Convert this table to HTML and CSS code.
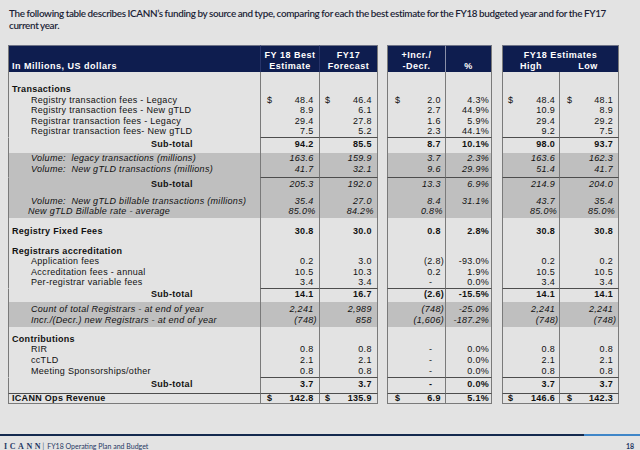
FILE: index.html
```html
<!DOCTYPE html>
<html lang="en">
<head>
<meta charset="utf-8">
<title>ICANN FY18 Funding</title>
<link rel="stylesheet" href="styles.css">
</head>
<body>
<p class="intro">The following table describes ICANN’s funding by source and type, comparing for each the best estimate for the FY18 budgeted year and for the FY17<br>current year.</p>

<div class="budget">
  <div class="r hd">
    <div class="l hl">In Millions, US dollars</div>
    <div class="a hc">FY 18 Best<br>Estimate</div>
    <div class="b hc">FY17<br>Forecast</div>
    <div class="g"></div>
    <div class="c hc">+Incr./<br>-Decr.</div>
    <div class="d hc"><br>%</div>
    <div class="g"></div>
    <div class="ef">
      <div class="eft">FY18 Estimates</div>
      <div class="efs"><span>High</span><span>Low</span></div>
    </div>
  </div>

  <div class="r sp12"><div class="l"></div><div class="a"></div><div class="b"></div><div class="g"></div><div class="c"></div><div class="d"></div><div class="g"></div><div class="e"></div><div class="f"></div></div>

  <div class="r"><div class="l sec">Transactions</div><div class="a"></div><div class="b"></div><div class="g"></div><div class="c"></div><div class="d"></div><div class="g"></div><div class="e"></div><div class="f"></div></div>
  <div class="r"><div class="l it1">Registry transaction fees - Legacy</div><div class="a"><span>$</span><span class="n">48.4</span></div><div class="b"><span>$</span><span class="n">46.4</span></div><div class="g"></div><div class="c"><span>$</span><span class="n">2.0</span></div><div class="d"><span class="n">4.3%</span></div><div class="g"></div><div class="e"><span>$</span><span class="n">48.4</span></div><div class="f"><span>$</span><span class="n">48.1</span></div></div>
  <div class="r"><div class="l it1">Registry transaction fees - New gTLD</div><div class="a"><span class="n">8.9</span></div><div class="b"><span class="n">6.1</span></div><div class="g"></div><div class="c"><span class="n">2.7</span></div><div class="d"><span class="n">44.9%</span></div><div class="g"></div><div class="e"><span class="n">10.9</span></div><div class="f"><span class="n">8.9</span></div></div>
  <div class="r"><div class="l it1">Registrar transaction fees - Legacy</div><div class="a"><span class="n">29.4</span></div><div class="b"><span class="n">27.8</span></div><div class="g"></div><div class="c"><span class="n">1.6</span></div><div class="d"><span class="n">5.9%</span></div><div class="g"></div><div class="e"><span class="n">29.4</span></div><div class="f"><span class="n">29.2</span></div></div>
  <div class="r"><div class="l it1">Registrar transaction fees- New gTLD</div><div class="a"><span class="n">7.5</span></div><div class="b"><span class="n">5.2</span></div><div class="g"></div><div class="c"><span class="n">2.3</span></div><div class="d"><span class="n">44.1%</span></div><div class="g"></div><div class="e"><span class="n">9.2</span></div><div class="f"><span class="n">7.5</span></div></div>
  <div class="r tot t1 bold"><div class="l st">Sub-total</div><div class="a"><span class="n">94.2</span></div><div class="b"><span class="n">85.5</span></div><div class="g"></div><div class="c"><span class="n">8.7</span></div><div class="d"><span class="n">10.1%</span></div><div class="g"></div><div class="e"><span class="n">98.0</span></div><div class="f"><span class="n">93.7</span></div></div>

  <div class="r band it b1"><div class="l it1">Volume:&nbsp; legacy transactions (millions)</div><div class="a"><span class="n">163.6</span></div><div class="b"><span class="n">159.9</span></div><div class="g"></div><div class="c"><span class="n">3.7</span></div><div class="d"><span class="n">2.3%</span></div><div class="g"></div><div class="e"><span class="n">163.6</span></div><div class="f"><span class="n">162.3</span></div></div>
  <div class="r band it b2"><div class="l it1">Volume:&nbsp; New gTLD transactions (millions)</div><div class="a"><span class="n">41.7</span></div><div class="b"><span class="n">32.1</span></div><div class="g"></div><div class="c"><span class="n">9.6</span></div><div class="d"><span class="n">29.9%</span></div><div class="g"></div><div class="e"><span class="n">51.4</span></div><div class="f"><span class="n">41.7</span></div></div>
  <div class="r band it tot t2"><div class="l st up">Sub-total</div><div class="a"><span class="n">205.3</span></div><div class="b"><span class="n">192.0</span></div><div class="g"></div><div class="c"><span class="n">13.3</span></div><div class="d"><span class="n">6.9%</span></div><div class="g"></div><div class="e"><span class="n">214.9</span></div><div class="f"><span class="n">204.0</span></div></div>
  <div class="r band sp6"><div class="l"></div><div class="a"></div><div class="b"></div><div class="g"></div><div class="c"></div><div class="d"></div><div class="g"></div><div class="e"></div><div class="f"></div></div>
  <div class="r band it"><div class="l it1">Volume:&nbsp; New gTLD billable transactions (millions)</div><div class="a"><span class="n">35.4</span></div><div class="b"><span class="n">27.0</span></div><div class="g"></div><div class="c"><span class="n">8.4</span></div><div class="d"><span class="n">31.1%</span></div><div class="g"></div><div class="e"><span class="n">43.7</span></div><div class="f"><span class="n">35.4</span></div></div>
  <div class="r band it b3"><div class="l it2">New gTLD Billable rate - average</div><div class="a"><span class="n pc">85.0%</span></div><div class="b"><span class="n pc">84.2%</span></div><div class="g"></div><div class="c"><span class="n pc">0.8%</span></div><div class="d"></div><div class="g"></div><div class="e"><span class="n pc">85.0%</span></div><div class="f"><span class="n pc">85.0%</span></div></div>

  <div class="r sp8"><div class="l"></div><div class="a"></div><div class="b"></div><div class="g"></div><div class="c"></div><div class="d"></div><div class="g"></div><div class="e"></div><div class="f"></div></div>
  <div class="r bold"><div class="l sec">Registry Fixed Fees</div><div class="a"><span class="n">30.8</span></div><div class="b"><span class="n">30.0</span></div><div class="g"></div><div class="c"><span class="n">0.8</span></div><div class="d"><span class="n">2.8%</span></div><div class="g"></div><div class="e"><span class="n">30.8</span></div><div class="f"><span class="n">30.8</span></div></div>
  <div class="r sp9"><div class="l"></div><div class="a"></div><div class="b"></div><div class="g"></div><div class="c"></div><div class="d"></div><div class="g"></div><div class="e"></div><div class="f"></div></div>

  <div class="r"><div class="l sec">Registrars accreditation</div><div class="a"></div><div class="b"></div><div class="g"></div><div class="c"></div><div class="d"></div><div class="g"></div><div class="e"></div><div class="f"></div></div>
  <div class="r"><div class="l it1">Application fees</div><div class="a"><span class="n">0.2</span></div><div class="b"><span class="n">3.0</span></div><div class="g"></div><div class="c"><span class="n neg">(2.8)</span></div><div class="d"><span class="n">-93.0%</span></div><div class="g"></div><div class="e"><span class="n">0.2</span></div><div class="f"><span class="n">0.2</span></div></div>
  <div class="r"><div class="l it1">Accreditation fees - annual</div><div class="a"><span class="n">10.5</span></div><div class="b"><span class="n">10.3</span></div><div class="g"></div><div class="c"><span class="n">0.2</span></div><div class="d"><span class="n">1.9%</span></div><div class="g"></div><div class="e"><span class="n">10.5</span></div><div class="f"><span class="n">10.5</span></div></div>
  <div class="r"><div class="l it1">Per-registrar variable fees</div><div class="a"><span class="n">3.4</span></div><div class="b"><span class="n">3.4</span></div><div class="g"></div><div class="c"><span class="n zero">-</span></div><div class="d"><span class="n">0.0%</span></div><div class="g"></div><div class="e"><span class="n">3.4</span></div><div class="f"><span class="n">3.4</span></div></div>
  <div class="r tot t3 bold"><div class="l st">Sub-total</div><div class="a"><span class="n">14.1</span></div><div class="b"><span class="n">16.7</span></div><div class="g"></div><div class="c"><span class="n neg">(2.6)</span></div><div class="d"><span class="n">-15.5%</span></div><div class="g"></div><div class="e"><span class="n">14.1</span></div><div class="f"><span class="n">14.1</span></div></div>

  <div class="r band it b4"><div class="l it1">Count of total Registrars - at end of year</div><div class="a"><span class="n">2,241</span></div><div class="b"><span class="n">2,989</span></div><div class="g"></div><div class="c"><span class="n neg">(748)</span></div><div class="d"><span class="n">-25.0%</span></div><div class="g"></div><div class="e"><span class="n">2,241</span></div><div class="f"><span class="n">2,241</span></div></div>
  <div class="r band it b5"><div class="l it1">Incr./(Decr.) new Registrars - at end of year</div><div class="a"><span class="n neg">(748)</span></div><div class="b"><span class="n">858</span></div><div class="g"></div><div class="c"><span class="n neg">(1,606)</span></div><div class="d"><span class="n">-187.2%</span></div><div class="g"></div><div class="e"><span class="n neg">(748)</span></div><div class="f"><span class="n neg">(748)</span></div></div>

  <div class="r sp7"><div class="l"></div><div class="a"></div><div class="b"></div><div class="g"></div><div class="c"></div><div class="d"></div><div class="g"></div><div class="e"></div><div class="f"></div></div>
  <div class="r"><div class="l sec">Contributions</div><div class="a"></div><div class="b"></div><div class="g"></div><div class="c"></div><div class="d"></div><div class="g"></div><div class="e"></div><div class="f"></div></div>
  <div class="r"><div class="l it1">RIR</div><div class="a"><span class="n">0.8</span></div><div class="b"><span class="n">0.8</span></div><div class="g"></div><div class="c"><span class="n zero">-</span></div><div class="d"><span class="n">0.0%</span></div><div class="g"></div><div class="e"><span class="n">0.8</span></div><div class="f"><span class="n">0.8</span></div></div>
  <div class="r"><div class="l it1">ccTLD</div><div class="a"><span class="n">2.1</span></div><div class="b"><span class="n">2.1</span></div><div class="g"></div><div class="c"><span class="n zero">-</span></div><div class="d"><span class="n">0.0%</span></div><div class="g"></div><div class="e"><span class="n">2.1</span></div><div class="f"><span class="n">2.1</span></div></div>
  <div class="r b6"><div class="l it1">Meeting Sponsorships/other</div><div class="a"><span class="n">0.8</span></div><div class="b"><span class="n">0.8</span></div><div class="g"></div><div class="c"><span class="n zero">-</span></div><div class="d"><span class="n">0.0%</span></div><div class="g"></div><div class="e"><span class="n">0.8</span></div><div class="f"><span class="n">0.8</span></div></div>
  <div class="r tot t4 bold"><div class="l st">Sub-total</div><div class="a"><span class="n">3.7</span></div><div class="b"><span class="n">3.7</span></div><div class="g"></div><div class="c"><span class="n zero">-</span></div><div class="d"><span class="n">0.0%</span></div><div class="g"></div><div class="e"><span class="n">3.7</span></div><div class="f"><span class="n">3.7</span></div></div>
  <div class="r grand bold"><div class="l sec">ICANN Ops Revenue</div><div class="a"><span>$</span><span class="n">142.8</span></div><div class="b"><span>$</span><span class="n">135.9</span></div><div class="g"></div><div class="c"><span>$</span><span class="n">6.9</span></div><div class="d"><span class="n">5.1%</span></div><div class="g"></div><div class="e"><span>$</span><span class="n">146.6</span></div><div class="f"><span>$</span><span class="n">142.3</span></div></div>
</div>

<footer class="foot">
  <div class="rule"><span class="dark"></span><span class="light"></span></div>
  <div class="meta"><span class="logo">ICANN</span><span class="sep">|</span><span class="doc">FY18 Operating Plan and Budget</span><span class="page">18</span></div>
</footer>
</body>
</html>
```
FILE: styles.css
```css
* { box-sizing: border-box; }
html, body { margin: 0; padding: 0; }
body {
  width: 640px;
  height: 450px;
  overflow: hidden;
  background: #e3e3e3;
  color: #111;
  font-family: "Liberation Sans", Arial, sans-serif;
}

.intro {
  margin: 0;
  padding: 6.5px 0 0 9px;
  font-family: Lato, "Open Sans", sans-serif;
  font-weight: 600;
  font-size: 9.9px;
  letter-spacing: -0.33px;
  word-spacing: -0.3px;
  line-height: 12.5px;
  color: #1b1e36;
  white-space: nowrap;
}

.budget {
  margin: 13.5px 0 0 8px;
  font-size: 9px;
  letter-spacing: 0.3px;
}

.r {
  display: grid;
  grid-template-columns: 252px 59px 59px 9px 58px 47px 10px 57px 60px;
  height: 10.6px;
  line-height: 10.6px;
}
.r > div { white-space: nowrap; min-width: 0; }

.l { border-left: 1px solid #7a7a7a; }
.a, .b, .c, .d, .e, .f { display: flex; justify-content: space-between; border-left: 1px solid #7a7a7a; }
.b, .d, .f { border-right: 1px solid #7a7a7a; }
.a { padding: 0 5.5px 0 6px; }
.b { padding: 0 5.3px 0 5px; }
.c { padding: 0 4.3px 0 7px; }
.d { padding: 0 2px 0 0; }
.e { padding: 0 4px 0 5px; }
.f { padding: 0 5px 0 7px; }
.n { margin-left: auto; }
.neg { margin-right: -3.3px; }
.pc { margin-right: -2px; }
.zero { margin-right: 8.5px; }

/* header */
.hd {
  height: 27px;
  line-height: 11px;
  color: #fff;
  font-weight: 700;
  letter-spacing: 0.5px;
}
.hd > div:not(.g) {
  background: #0e1d4f;
  border-top: 1px solid #6f7488;
  padding-top: 3.5px;
}
.hd .hl { padding: 14.5px 0 0 3px !important; }
.hd .hc { display: block; text-align: center; padding-left: 0; padding-right: 0; }
.hd .a, .hd .b { border-left-color: #27346a; }
.hd .b { border-right-color: #7a7a7a; }
.hd .d { border-left-color: #8a90a8; }
.ef {
  grid-column: span 2;
  border-left: 1px solid #7a7a7a;
  border-right: 1px solid #7a7a7a;
  text-align: center;
}
.efs { display: grid; grid-template-columns: 56px 58px; }

/* label styles */
.sec { font-weight: 700; padding-left: 3px; }
.it1 { padding-left: 22px; }
.it2 { padding-left: 19px; }
.st { padding-left: 142px; font-weight: 700; }
.up { font-style: normal; }
.bold { font-weight: 700; }
.it { font-style: italic; }
.it .st { font-style: normal; }

/* gray bands */
.band > div:not(.g) { background: #bfbfbf; }

/* spacers */
.sp12 { height: 12px; }
.sp6 { height: 5.7px; }
.sp8 { height: 7.9px; }
.sp9 { height: 8.6px; }
.sp7 { height: 7px; }

/* sub-total rows */
.tot > div { border-top: 1px solid transparent; }
.tot > .a, .tot > .b, .tot > .c, .tot > .d, .tot > .e, .tot > .f { border-top-color: #4d4d4d; }
.t1 { height: 16px; }
.t1 > div { padding-top: 1px; }
.b1 { height: 11px; line-height: 11px; }
.b2 { height: 13px; }
.t2 { height: 13px; }
.t2 > div { padding-top: 1px; }
.b3 { height: 12.2px; }
.t3 { height: 14px; }
.b4 { height: 13px; }
.b4 > div { padding-top: 2.5px; }
.b5 { height: 12px; }
.b5 > div { padding-top: 0.5px; }
.b6 { height: 11.7px; }
.t4 { height: 15.5px; }
.t4 > div { padding-top: 0.3px; }
.grand { height: 11px; line-height: 9px; }
.grand > div:not(.g) { border-top: 1px solid #4d4d4d; border-bottom: 1px solid #7a7a7a; }

/* footer */
.foot { margin-top: 30px; }
.rule { display: flex; height: 2.5px; }
.dark { flex: 0 0 584px; background: #142a4f; }
.light { flex: 1; background: #3f86c8; }
.meta {
  display: flex;
  align-items: baseline;
  margin-top: 3.5px;
  padding: 0 4px;
  line-height: 12px;
  color: #1f3864;
}
.logo {
  font-family: "Liberation Serif", serif;
  font-weight: 700;
  font-size: 8px;
  letter-spacing: 2.6px;
}
.sep { font-family: Lato, sans-serif; font-size: 8px; margin: 0 3px 0 -1px; color: #5a6b8a; }
.doc { font-family: Lato, sans-serif; font-size: 7px; }
.page { margin-left: auto; font-family: Lato, sans-serif; font-size: 7px; font-weight: 700; padding-right: 2px; }
```
